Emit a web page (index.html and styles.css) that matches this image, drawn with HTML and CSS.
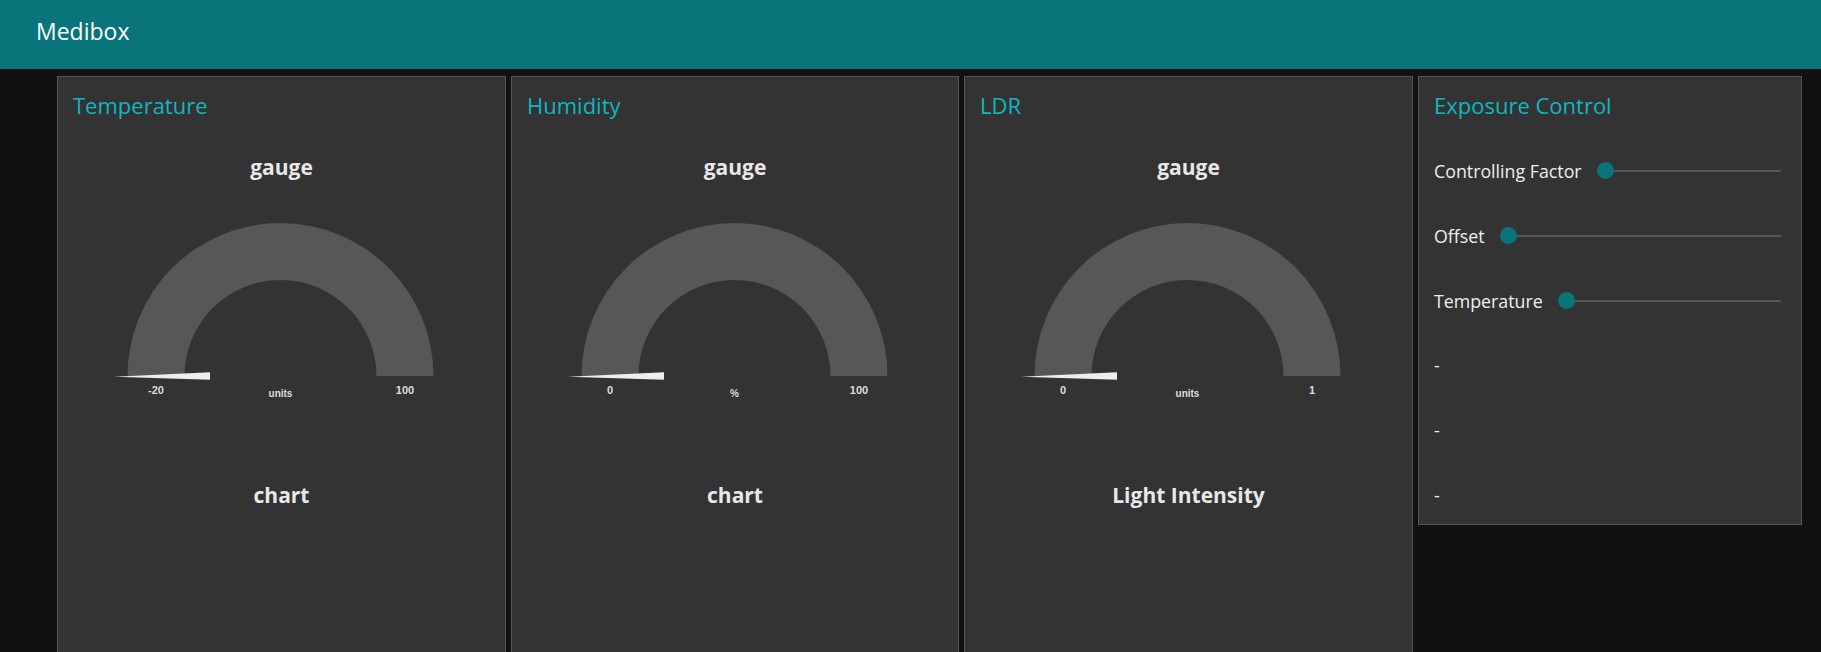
FILE: index.html
```html
<!DOCTYPE html>
<html>
<head>
<meta charset="utf-8">
<title>Medibox</title>
<link rel="stylesheet" href="styles.css">
</head>
<body>
<header class="toolbar"><span class="app-title">Medibox</span></header>
<main class="groups">
  <section class="card card-tall">
    <div class="card-title">Temperature</div>
    <div class="row row-center bold gauge-title">gauge</div>
    <svg class="gauge" width="447" height="252" viewBox="0 0 447 252">
      <path class="arc" d="M 69.5 169 A 153 153 0 0 1 375.5 169 L 318.5 169 A 96 96 0 0 0 126.5 169 Z"/>
      <polygon class="needle" points="56,169.7 152,165.3 152,172.7"/>
      <text class="lbl" x="98" y="187" text-anchor="middle">-20</text>
      <text class="lbl units" x="222.5" y="190" text-anchor="middle">units</text>
      <text class="lbl" x="347" y="187" text-anchor="middle">100</text>
    </svg>
    <div class="row row-center bold">chart</div>
  </section>
  <section class="card card-tall">
    <div class="card-title">Humidity</div>
    <div class="row row-center bold gauge-title">gauge</div>
    <svg class="gauge" width="447" height="252" viewBox="0 0 447 252">
      <path class="arc" d="M 69.5 169 A 153 153 0 0 1 375.5 169 L 318.5 169 A 96 96 0 0 0 126.5 169 Z"/>
      <polygon class="needle" points="56,169.7 152,165.3 152,172.7"/>
      <text class="lbl" x="98" y="187" text-anchor="middle">0</text>
      <text class="lbl units" x="222.5" y="190" text-anchor="middle">%</text>
      <text class="lbl" x="347" y="187" text-anchor="middle">100</text>
    </svg>
    <div class="row row-center bold">chart</div>
  </section>
  <section class="card card-tall">
    <div class="card-title">LDR</div>
    <div class="row row-center bold gauge-title">gauge</div>
    <svg class="gauge" width="447" height="252" viewBox="0 0 447 252">
      <path class="arc" d="M 69.5 169 A 153 153 0 0 1 375.5 169 L 318.5 169 A 96 96 0 0 0 126.5 169 Z"/>
      <polygon class="needle" points="56,169.7 152,165.3 152,172.7"/>
      <text class="lbl" x="98" y="187" text-anchor="middle">0</text>
      <text class="lbl units" x="222.5" y="190" text-anchor="middle">units</text>
      <text class="lbl" x="347" y="187" text-anchor="middle">1</text>
    </svg>
    <div class="row row-center bold">Light Intensity</div>
  </section>
  <section class="card">
    <div class="card-title">Exposure Control</div>
    <div class="row">
      <span class="label">Controlling Factor</span>
      <div class="slider"><span class="thumb"></span><span class="track"></span></div>
    </div>
    <div class="row">
      <span class="label">Offset</span>
      <div class="slider"><span class="thumb"></span><span class="track"></span></div>
    </div>
    <div class="row">
      <span class="label">Temperature</span>
      <div class="slider"><span class="thumb"></span><span class="track"></span></div>
    </div>
    <div class="row"><span class="label">-</span></div>
    <div class="row"><span class="label">-</span></div>
    <div class="row"><span class="label">-</span></div>
  </section>
</main>
</body>
</html>
```
FILE: styles.css
```css
html, body {
  margin: 0;
  padding: 0;
  background: #111111;
  overflow: hidden;
  font-family: "Open Sans", "Noto Sans", sans-serif;
  color: #eeeeee;
}

.toolbar {
  height: 69px;
  box-sizing: border-box;
  background: #097479;
  padding: 15px 36px 0;
}

.app-title {
  font-size: 23px;
  color: #ffffff;
}

.groups {
  display: grid;
  grid-template-columns: 449px 448px 449px 384px;
  column-gap: 5px;
  align-items: start;
  padding: 7px 0 0 57px;
}

.card {
  background: #333333;
  border: 1px solid #555555;
  display: flex;
  flex-direction: column;
  gap: 7.2px;
}

.card-tall {
  height: 700px;
}

.card-title {
  height: 58px;
  box-sizing: border-box;
  padding: 13px 15px 0;
  line-height: 30px;
  font-size: 22px;
  color: #0eb8c0;
}

.row {
  height: 57.6px;
  box-sizing: border-box;
  padding: 0 15px;
  display: flex;
  align-items: center;
  font-size: 17.8px;
}

.row-center {
  justify-content: center;
}

.bold {
  font-weight: 700;
  font-size: 21px;
  color: #e8e8e8;
}

.gauge-title {
  padding-bottom: 7px;
}

.gauge {
  display: block;
  flex: none;
}

.arc {
  fill: #575757;
}

.needle {
  fill: #eeeeee;
}

.lbl {
  font-family: "Liberation Sans", Arial, sans-serif;
  font-weight: 700;
  font-size: 11px;
  fill: #dddddd;
}

.lbl.units {
  font-size: 10px;
}

.label {
  white-space: nowrap;
}

.slider {
  flex: 1;
  display: flex;
  align-items: center;
  margin: 0 5px 0 15px;
}

.thumb {
  width: 17px;
  height: 17px;
  border-radius: 50%;
  background: #097479;
  flex: none;
}

.track {
  flex: 1;
  height: 2px;
  background: #555555;
}
```
